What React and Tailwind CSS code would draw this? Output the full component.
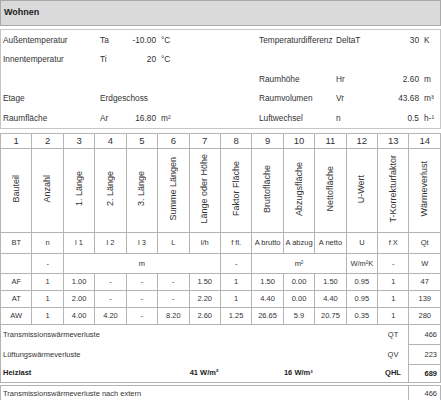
import React from 'react';

const font = { fontFamily: '"Liberation Sans", Arial, sans-serif' };

const headers = [
  'Bauteil', 'Anzahl', '1. Länge', '2. Länge', '3. Länge', 'Summe Längen', 'Länge oder Höhe',
  'Faktor Fläche', 'Bruttofläche', 'Abzugsfläche', 'Nettofläche', 'U-Wert', 'T-Korrekturfaktor', 'Wärmeverlust',
];

const symbols = ['BT', 'n', 'l 1', 'l 2', 'l 3', 'L', 'l/h', 'f fl.', 'A brutto', 'A abzug', 'A netto', 'U', 'f X', 'Qt'];

const rows = [
  ['AF', '1', '1.00', '-', '-', '-', '1.50', '1', '1.50', '0.00', '1.50', '0.95', '1', '47'],
  ['AT', '1', '2.00', '-', '-', '-', '2.20', '1', '4.40', '0.00', '4.40', '0.95', '1', '139'],
  ['AW', '1', '4.00', '4.20', '-', '8.20', '2.60', '1.25', '26.65', '5.9', '20.75', '0.35', '1', '280'],
];

const cell = 'border border-[#b4b4b4] text-center align-middle p-0';

function InfoRow({ children }) {
  return <div className="flex items-center h-[19.5px] pl-[2px]">{children}</div>;
}

export default function App() {
  return (
    <div className="w-[441px] h-[400px] overflow-hidden bg-white text-[#333]" style={font}>
      {/* Title bar */}
      <div className="h-[26px] bg-[#dadada] border border-[#a9a9a9] flex items-center pl-[3px]">
        <span className="text-[9px] font-bold text-[#222]">Wohnen</span>
      </div>

      {/* Room data */}
      <div className="mt-[3px] border border-[#c6c6c6] text-[8.3px]">
        <InfoRow>
          <span className="w-[97px]">Außentemperatur</span>
          <span className="w-[22px]">Ta</span>
          <span className="w-[34px] text-right">-10.00</span>
          <span className="w-[103px] pl-[5px]">°C</span>
          <span className="w-[77px]">Temperaturdifferenz</span>
          <span className="w-[40px]">DeltaT</span>
          <span className="w-[43px] text-right">30</span>
          <span className="pl-[5px]">K</span>
        </InfoRow>
        <InfoRow>
          <span className="w-[97px]">Innentemperatur</span>
          <span className="w-[22px]">Ti</span>
          <span className="w-[34px] text-right">20</span>
          <span className="w-[103px] pl-[5px]">°C</span>
        </InfoRow>
        <InfoRow>
          <span className="w-[256px]" />
          <span className="w-[77px]">Raumhöhe</span>
          <span className="w-[40px]">Hr</span>
          <span className="w-[43px] text-right">2.60</span>
          <span className="pl-[5px]">m</span>
        </InfoRow>
        <InfoRow>
          <span className="w-[97px]">Etage</span>
          <span className="w-[159px]">Erdgeschoss</span>
          <span className="w-[77px]">Raumvolumen</span>
          <span className="w-[40px]">Vr</span>
          <span className="w-[43px] text-right">43.68</span>
          <span className="pl-[5px]">m³</span>
        </InfoRow>
        <InfoRow>
          <span className="w-[97px]">Raumfläche</span>
          <span className="w-[22px]">Ar</span>
          <span className="w-[34px] text-right">16.80</span>
          <span className="w-[103px] pl-[5px]">m²</span>
          <span className="w-[77px]">Luftwechsel</span>
          <span className="w-[40px]">n</span>
          <span className="w-[43px] text-right">0.5</span>
          <span className="pl-[5px]">h-¹</span>
        </InfoRow>
      </div>

      {/* Component table */}
      <table className="mt-[4px] w-[441px] table-fixed border-collapse">
        <tbody>
          <tr className="h-[15px] text-[9.5px]">
            {headers.map((_, i) => (
              <td key={i} className={cell}>{i + 1}</td>
            ))}
          </tr>
          <tr className="h-[84px] text-[9px]">
            {headers.map((h) => (
              <td key={h} className={`${cell} align-bottom`}>
                <div className="flex justify-center pb-[3px]">
                  <span className="[writing-mode:vertical-rl] rotate-180 whitespace-nowrap leading-none">{h}</span>
                </div>
              </td>
            ))}
          </tr>
          <tr className="h-[21px] text-[7.5px]">
            {symbols.map((s) => (
              <td key={s} className={cell}>{s}</td>
            ))}
          </tr>
          <tr className="h-[20px] text-[7.5px]">
            <td className={cell}></td>
            <td className={cell}>-</td>
            <td className={cell} colSpan={5}>m</td>
            <td className={cell}>-</td>
            <td className={cell} colSpan={3}>m²</td>
            <td className={cell}>W/m²K</td>
            <td className={cell}>-</td>
            <td className={cell}>W</td>
          </tr>
          {rows.map((r) => (
            <tr key={r[0]} className="h-[17px] text-[7.5px]">
              {r.map((v, i) => (
                <td key={i} className={cell}>{v}</td>
              ))}
            </tr>
          ))}

          {/* Totals */}
          <tr className="h-[20px] text-[7.5px]">
            <td colSpan={12} className="border-l border-[#b4b4b4] pl-[2px] p-0 text-left">Transmissionswärmeverluste</td>
            <td className="p-0 text-center">QT</td>
            <td className="border border-[#b4b4b4] p-0 pr-[3px] text-right">466</td>
          </tr>
          <tr className="h-[20px] text-[7.5px]">
            <td colSpan={12} className="border-l border-[#b4b4b4] pl-[2px] p-0 text-left">Lüftungswärmeverluste</td>
            <td className="p-0 text-center">QV</td>
            <td className="border border-[#b4b4b4] p-0 pr-[3px] text-right">223</td>
          </tr>
          <tr className="h-[18px] text-[7.5px] font-bold text-[#222]">
            <td colSpan={7} className="border-l border-b border-[#b4b4b4] p-0 pl-[2px] pr-[2px]">
              <div className="flex justify-between">
                <span>Heizlast</span>
                <span>41 W/m²</span>
              </div>
            </td>
            <td colSpan={3} className="border-b border-[#b4b4b4] p-0 pr-[2px] text-right">16 W/m³</td>
            <td colSpan={2} className="border-b border-[#b4b4b4] p-0"></td>
            <td className="border-b border-[#b4b4b4] p-0 text-center">QHL</td>
            <td className="border border-[#b4b4b4] p-0 pr-[3px] text-right">689</td>
          </tr>
        </tbody>
      </table>

      <table className="mt-[2px] w-[441px] table-fixed border-collapse">
        <tbody>
          <tr className="h-[16px] text-[7.5px]">
            <td colSpan={13} className="border border-[#b4b4b4] p-0 pl-[2px] text-left">Transmissionswärmeverluste nach extern</td>
            <td className="border border-[#b4b4b4] p-0 pr-[3px] text-right">466</td>
          </tr>
        </tbody>
      </table>
    </div>
  );
}
